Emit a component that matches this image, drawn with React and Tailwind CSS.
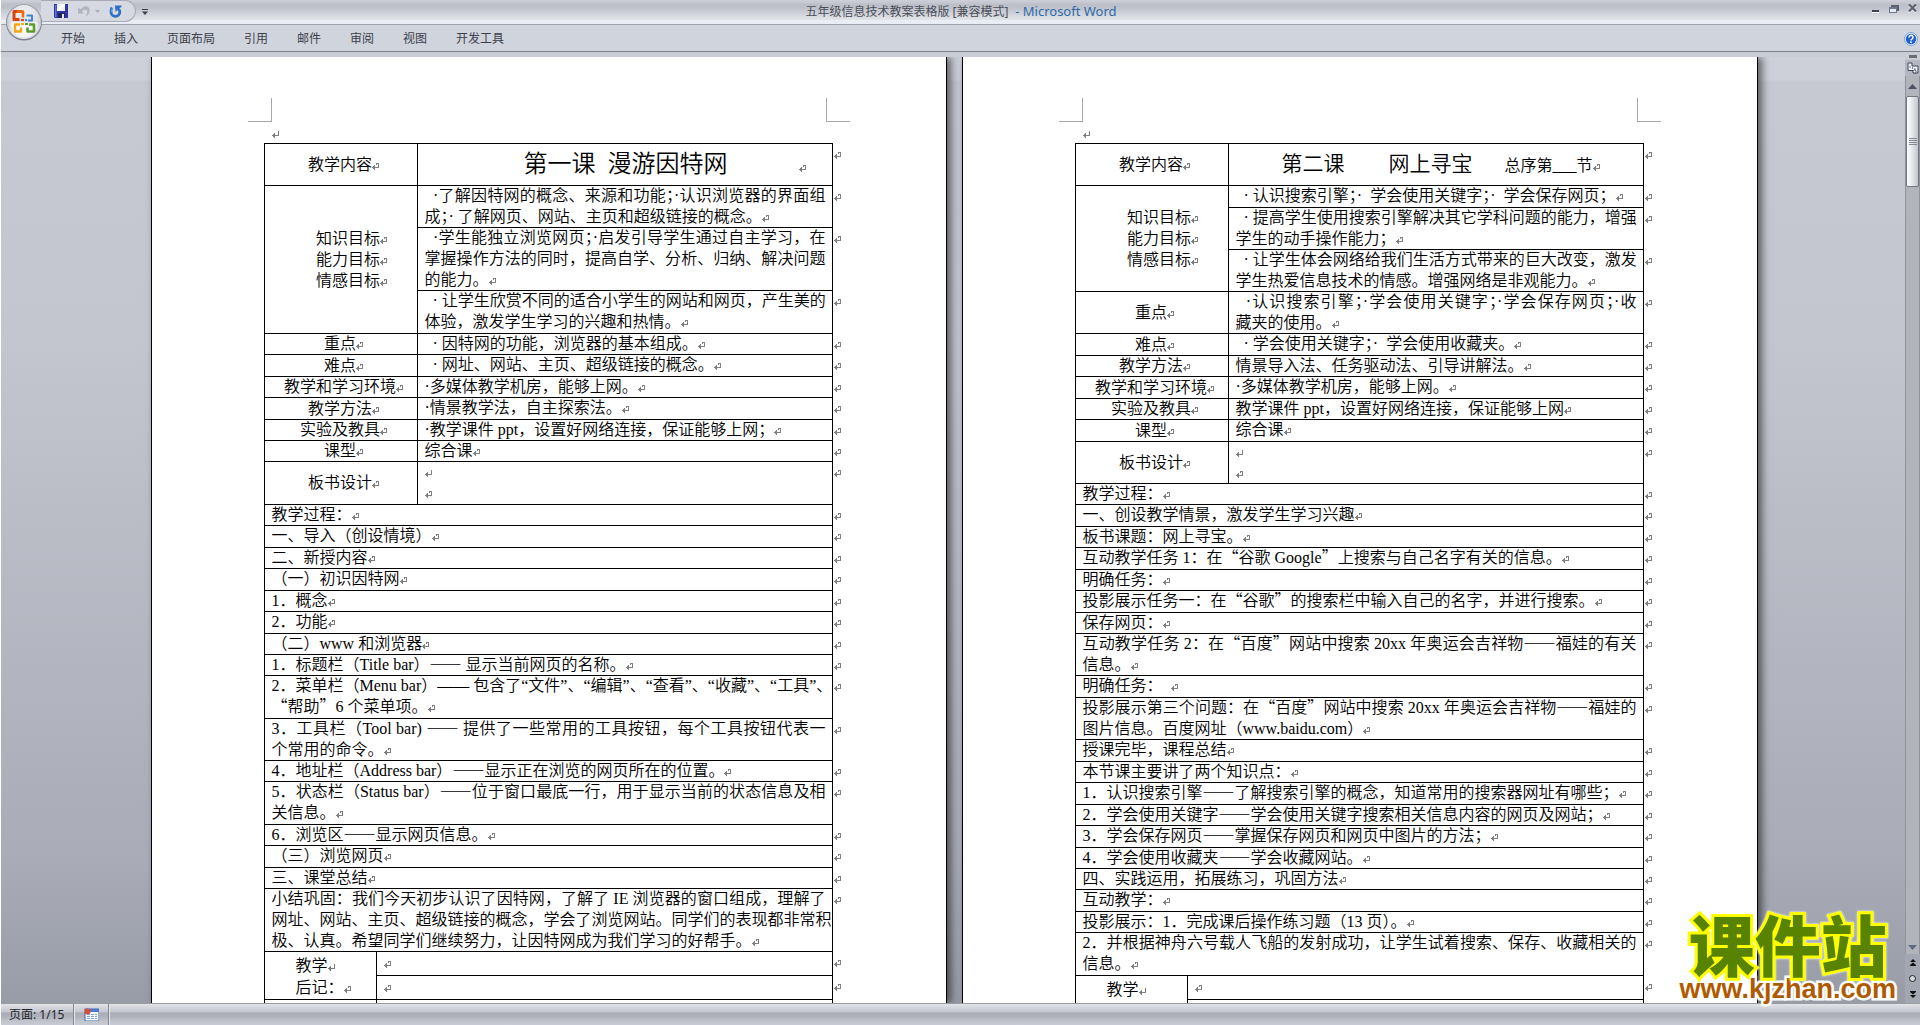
import React from "react";

const NB = "\u00a0";
const DOT = NB + NB + "·";
const SEP = "；·";

const H = {
  21: "h-[21px]",
  22: "h-[22px]",
  24: "h-[24px]",
  42: "h-[42px]",
  43: "h-[43px]",
  63: "h-[63px]",
};

function Mark({ empty = false, className = "" }) {
  return (
    <svg
      viewBox="0 0 8 7"
      className={`inline-block h-[7px] w-2 shrink-0 fill-[#808080] align-baseline ${className}`}
      shapeRendering="crispEdges"
      aria-hidden="true"
    >
      {!empty && <rect x="4" y="0" width="3" height="1" />}
      {!empty && <rect x="4" y="1" width="1" height="1" />}
      <rect x="6" y="0" width="1" height="5" />
      <rect x="2" y="4" width="5" height="1" />
      <rect x="0" y="4" width="1" height="1" />
      <rect x="1" y="3" width="1" height="3" />
      <rect x="2" y="2" width="1" height="5" />
    </svg>
  );
}

// Quotes and dashes take the Chinese face, so that each fills a full square.
function Mixed({ text }) {
  return text.split(/([“”—]+)/).map((part, i) =>
    i % 2 === 1 ? (
      <span key={i} className="font-['Noto_Sans_CJK_SC',sans-serif] leading-none">
        {part}
      </span>
    ) : (
      part
    ),
  );
}

function Lines({ lines, narrow = false }) {
  return lines.map((line, i) => {
    const last = i === lines.length - 1;
    return (
      <span
        key={i}
        className={`block whitespace-nowrap ${last ? "" : "text-justify [text-align-last:justify]"}`}
      >
        {narrow && !last ? line : <Mixed text={line} />}
        {last && <Mark />}
      </span>
    );
  });
}

const RULE = "shadow-[inset_1px_1px_0_#000]";

function EndMark() {
  return (
    <td className="pl-[2px] align-top shadow-[inset_1px_0_0_#000]">
      <Mark />
    </td>
  );
}

function LabelCell({ label, rowSpan = 1, shift = false }) {
  return (
    <th
      scope="row"
      colSpan={2}
      rowSpan={rowSpan}
      className={`${RULE} text-center align-middle [font-weight:inherit] ${shift ? "pl-4" : ""}`}
    >
      {label.map((l) => (
        <span key={l} className="block whitespace-nowrap">
          {l}
          <Mark className="-mr-2" />
        </span>
      ))}
    </th>
  );
}

function FieldRow({ label, h, lines, rowSpan, shift }) {
  return (
    <tr className={H[h]}>
      {label && <LabelCell label={label} rowSpan={rowSpan} shift={shift} />}
      <td className={`${RULE} pr-[6px] pl-2 align-top`}>
        <Lines lines={lines} />
      </td>
      <EndMark />
    </tr>
  );
}

function BoardRow({ h }) {
  return (
    <tr className={H[h]}>
      <LabelCell label={["板书设计"]} />
      <td className={`${RULE} px-2 align-top`}>
        <span className="block">
          <Mark empty />
        </span>
        <span className="block">
          <Mark />
        </span>
      </td>
      <EndMark />
    </tr>
  );
}

function TextRow({ h, lines, narrow }) {
  return (
    <tr className={H[h]}>
      <td colSpan={3} className={`${RULE} pr-[6px] pl-2 align-top`}>
        <Lines lines={lines} narrow={narrow} />
      </td>
      <EndMark />
    </tr>
  );
}

function NotesRows() {
  return (
    <>
      <tr className={H[24]}>
        <th
          scope="row"
          rowSpan={2}
          className={`${RULE} pt-1 pl-8 text-left align-top leading-[22px] [font-weight:inherit]`}
        >
          <span className="block whitespace-nowrap">
            教学
            <Mark empty />
          </span>
          <span className="block whitespace-nowrap">
            后记：
            <Mark />
          </span>
        </th>
        <td colSpan={2} className={`${RULE} px-2 align-top leading-[24px]`}>
          <Mark />
        </td>
        <EndMark />
      </tr>
      <tr className={H[24]}>
        <td colSpan={2} className={`${RULE} px-2 align-top leading-[24px]`}>
          <Mark />
        </td>
        <EndMark />
      </tr>
      <tr className={H[24]}>
        <td className={RULE} />
        <td colSpan={2} className={RULE} />
        <EndMark />
      </tr>
    </>
  );
}

function Corner({ right = false }) {
  return (
    <span
      className={`block h-[24px] w-[24px] border-b border-[#a5a5b5] ${right ? "border-l" : "border-r"}`}
    />
  );
}

function Page({ label, title, children }) {
  return (
    <article
      aria-label={label}
      className="flex max-w-[796px] flex-1 flex-col border-x border-black bg-white px-[112px] shadow-[4px_0_8px_rgba(0,0,0,0.55)]"
    >
      <div className="-mx-4 mt-[41px] flex justify-between">
        <Corner />
        <Corner right />
      </div>
      <div className="h-[21px] pl-2 leading-[21px]">
        <Mark empty />
      </div>
      <table className="w-full table-fixed border-separate border-spacing-0 text-left leading-[21px]">
        <colgroup>
          <col className="w-[112px]" />
          <col className="w-[41px]" />
          <col />
          <col className="w-[2px]" />
        </colgroup>
        <tbody>
          <tr className={H[42]}>
            <LabelCell label={["教学内容"]} />
            <td className={`${RULE} align-middle`}>{title}</td>
            <EndMark />
          </tr>
          {children}
        </tbody>
      </table>
    </article>
  );
}

const FIELDS_1 = [
  {
    label: ["知识目标", "能力目标", "情感目标"],
    rowSpan: 3,
    shift: true,
    h: 42,
    lines: [DOT + "了解因特网的概念、来源和功能" + SEP + "认识浏览器的界面组", "成" + SEP + NB + "了解网页、网站、主页和超级链接的概念。"],
  },
  {
    h: 63,
    lines: [DOT + "学生能独立浏览网页" + SEP + "启发引导学生通过自主学习，在", "掌握操作方法的同时，提高自学、分析、归纳、解决问题", "的能力。"],
  },
  { h: 43, lines: [DOT + NB + "让学生欣赏不同的适合小学生的网站和网页，产生美的", "体验，激发学生学习的兴趣和热情。"] },
  { label: ["重点"], h: 21, lines: [DOT + NB + "因特网的功能，浏览器的基本组成。"] },
  { label: ["难点"], h: 22, lines: [DOT + NB + "网址、网站、主页、超级链接的概念。"] },
  { label: ["教学和学习环境"], h: 21, lines: ["·多媒体教学机房，能够上网。"] },
  { label: ["教学方法"], h: 22, lines: ["·情景教学法，自主探索法。"] },
  { label: ["实验及教具"], h: 21, lines: ["·教学课件 ppt，设置好网络连接，保证能够上网；"] },
  { label: ["课型"], h: 21, lines: ["综合课"] },
];

const TEXT_1 = [
  [21, ["教学过程："]],
  [22, ["一、导入（创设情境）"]],
  [21, ["二、新授内容"]],
  [22, ["（一）初识因特网"]],
  [21, ["1．概念"]],
  [22, ["2．功能"]],
  [21, ["（二）www 和浏览器"]],
  [21, ["1．标题栏（Title bar）——" + NB + "显示当前网页的名称。"]],
  [43, ["2．菜单栏（Menu bar）—— 包含了“文件”、“编辑”、“查看”、“收藏”、“工具”、", "“帮助”6 个菜单项。"], true],
  [42, ["3．工具栏（Tool bar) —— 提供了一些常用的工具按钮，每个工具按钮代表一", "个常用的命令。"]],
  [21, ["4．地址栏（Address bar）——显示正在浏览的网页所在的位置。"]],
  [43, ["5．状态栏（Status bar）——位于窗口最底一行，用于显示当前的状态信息及相", "关信息。"]],
  [21, ["6．浏览区——显示网页信息。"]],
  [22, ["（三）浏览网页"]],
  [21, ["三、课堂总结"]],
  [
    63,
    [
      "小结巩固：我们今天初步认识了因特网，了解了 IE 浏览器的窗口组成，理解了",
      "网址、网站、主页、超级链接的概念，学会了浏览网站。同学们的表现都非常积",
      "极、认真。希望同学们继续努力，让因特网成为我们学习的好帮手。",
    ],
  ],
];

const FIELDS_2 = [
  {
    label: ["知识目标", "能力目标", "情感目标"],
    rowSpan: 3,
    shift: true,
    h: 22,
    lines: [DOT + NB + "认识搜索引擎" + SEP + NB + NB + "学会使用关键字" + SEP + NB + NB + "学会保存网页；"],
  },
  { h: 42, lines: [DOT + NB + "提高学生使用搜索引擎解决其它学科问题的能力，增强", "学生的动手操作能力；"] },
  { h: 42, lines: [DOT + NB + "让学生体会网络给我们生活方式带来的巨大改变，激发", "学生热爱信息技术的情感。增强网络是非观能力。"] },
  { label: ["重点"], h: 42, lines: [DOT + "认识搜索引擎" + SEP + "学会使用关键字" + SEP + "学会保存网页" + SEP + "收", "藏夹的使用。"] },
  { label: ["难点"], h: 22, lines: [DOT + NB + "学会使用关键字" + SEP + NB + NB + "学会使用收藏夹。"] },
  { label: ["教学方法"], h: 21, lines: ["情景导入法、任务驱动法、引导讲解法。"] },
  { label: ["教学和学习环境"], h: 22, lines: ["·多媒体教学机房，能够上网。"] },
  { label: ["实验及教具"], h: 21, lines: ["教学课件 ppt，设置好网络连接，保证能够上网"] },
  { label: ["课型"], h: 22, lines: ["综合课"] },
];

const TEXT_2 = [
  [21, ["教学过程："]],
  [22, ["一、创设教学情景，激发学生学习兴趣"]],
  [21, ["板书课题：网上寻宝。"]],
  [22, ["互动教学任务 1：在“谷歌 Google”上搜索与自己名字有关的信息。"]],
  [21, ["明确任务："]],
  [22, ["投影展示任务一：在“谷歌”的搜索栏中输入自己的名字，并进行搜索。"]],
  [21, ["保存网页："]],
  [42, ["互动教学任务 2：在“百度”网站中搜索 20xx 年奥运会吉祥物——福娃的有关", "信息。"]],
  [22, ["明确任务：" + NB + NB]],
  [42, ["投影展示第三个问题：在“百度”网站中搜索 20xx 年奥运会吉祥物——福娃的", "图片信息。百度网址（www.baidu.com）"]],
  [22, ["授课完毕，课程总结"]],
  [21, ["本节课主要讲了两个知识点："]],
  [22, ["1．认识搜索引擎——了解搜索引擎的概念，知道常用的搜索器网址有哪些；"]],
  [21, ["2．学会使用关键字——学会使用关键字搜索相关信息内容的网页及网站；"]],
  [22, ["3．学会保存网页——掌握保存网页和网页中图片的方法；"]],
  [21, ["4．学会使用收藏夹——学会收藏网站。"]],
  [21, ["四、实践运用，拓展练习，巩固方法"]],
  [22, ["互动教学："]],
  [21, ["投影展示：1．完成课后操作练习题（13 页）。"]],
  [43, ["2．并根据神舟六号载人飞船的发射成功，让学生试着搜索、保存、收藏相关的", "信息。"]],
];

const TABS = ["开始", "插入", "页面布局", "引用", "邮件", "审阅", "视图", "开发工具"];

function OfficeOrb() {
  return (
    <button type="button" aria-label="Office 按钮" className="absolute top-[3px] left-1 h-[38px] w-[38px]">
      <svg viewBox="0 0 38 38" className="h-full w-full">
        <defs>
          <radialGradient id="orb" cx="50%" cy="60%" r="55%">
            <stop offset="0" stopColor="#ffffff" />
            <stop offset="0.6" stopColor="#f2f3f6" />
            <stop offset="0.85" stopColor="#c9ccd5" />
            <stop offset="1" stopColor="#a3a7b2" />
          </radialGradient>
          <linearGradient id="orbTop" x1="0" y1="0" x2="0" y2="1">
            <stop offset="0" stopColor="#ffffff" />
            <stop offset="1" stopColor="#d2d5dd" />
          </linearGradient>
        </defs>
        <circle cx="19" cy="19.5" r="18" fill="#7d818c" />
        <circle cx="19" cy="18.7" r="17.4" fill="url(#orb)" />
        <path d="M3 18a16 16 0 0 1 32 0q-16 3 -32 0z" fill="url(#orbTop)" opacity="0.75" />
        <g fill="none" strokeLinejoin="round">
          <path d="M14.500 16.500h-5.500v-8h8" stroke="#d9420b" strokeWidth="3" />
          <path d="M12 8.500h6v6" stroke="#ee6c10" strokeWidth="2.600" />
          <path d="M21.500 12.500h5.500v5h-4" stroke="#3b86cf" strokeWidth="2" />
          <path d="M15 21.500h-5v7h6v-4" stroke="#f3a712" strokeWidth="2.400" />
          <path d="M24 21.500h5v7h-6.500v-4" stroke="#5a9e2c" strokeWidth="2.600" />
        </g>
        <rect x="16" y="16" width="3" height="2" fill="#d9420b" />
        <rect x="20" y="16" width="2" height="2" fill="#3b86cf" />
        <rect x="16" y="20" width="3" height="2" fill="#f3a712" />
        <rect x="20" y="20" width="3" height="2" fill="#5a9e2c" />
      </svg>
    </button>
  );
}

function SaveIcon() {
  return (
    <svg viewBox="0 0 14 14" className="h-[14px] w-[14px]">
      <path d="M0 0h14v14H1L0 13z" fill="#2f35a8" />
      <path d="M1 1h1.500v12H1z" fill="#6a71dc" />
      <rect x="3" y="0" width="8" height="7" fill="#eef1fb" />
      <path d="M3 6L9 0h2v1L5 7H3z" fill="#ffffff" />
      <rect x="4" y="9" width="7" height="5" fill="#20265a" />
      <rect x="8" y="10" width="2" height="4" fill="#e4e7f5" />
    </svg>
  );
}

function UndoIcon() {
  return (
    <svg viewBox="0 0 13 13" className="h-[13px] w-[13px]">
      <path d="M1 2v6.500h6L5 6.500q2.500-3 4.500-1.500t-1 7q5-3.500 4-7.500T7 1.500L3 4.500z" fill="#b0b4bf" />
    </svg>
  );
}

function RedoIcon() {
  return (
    <svg viewBox="0 0 13 13" className="h-[13px] w-[13px]">
      <path d="M3 2.500q-1.500 2-1 4.500a4.400 4.400 0 0 0 8.800 0q0-2-2-3.500" fill="none" stroke="#2f6fc4" strokeWidth="2.800" />
      <path d="M3.200 3.500q-1 1.500-.7 3.500" fill="none" stroke="#6ba6ea" strokeWidth="1" />
      <path d="M6 0.500h6.500v1.500l-2 1L6.500 7z" fill="#2f6fc4" />
    </svg>
  );
}

function TitleBar() {
  return (
    <div className="flex h-[25px] items-start border-b border-[#9fa3ae] bg-[linear-gradient(to_bottom,#cdd0d8_0,#c4c7cf_3px,#bcbfc8_4px,#bfc2cb_8px,#cbced6_12px,#dcdfe4_18px,#e2e4e6_20px,#eaeef6_20px,#e8ecf4_24px)]">
      <div className="flex flex-1 items-start">
        <div className="ml-[40px] flex h-[22px] w-[95px] items-center rounded-r-full border border-l-0 border-[#a8abb6] bg-[#d6d9e1] pl-[13px]">
          <button type="button" aria-label="保存">
            <SaveIcon />
          </button>
          <button type="button" aria-label="撤消" className="ml-[9px]">
            <UndoIcon />
          </button>
          <button type="button" aria-label="撤消列表" className="ml-[5px]">
            <svg viewBox="0 0 5 3" className="h-[3px] w-[5px]">
              <path d="M0 0h5L2.500 3z" fill="#a9adb8" />
            </svg>
          </button>
          <button type="button" aria-label="恢复" className="ml-[9px]">
            <RedoIcon />
          </button>
        </div>
        <button type="button" aria-label="自定义快速访问工具栏" className="mt-[9px] ml-[6px]">
          <svg viewBox="0 0 6 6" className="h-[6px] w-[6px]">
            <path d="M0 0h6v1H0zM0 2.500h6L3 6z" fill="#3a3e48" />
          </svg>
        </button>
      </div>
      <h1 className="pt-[2px] pl-1 text-[12px] leading-[20px] whitespace-pre text-[#4a4e58]">
        五年级信息技术教案表格版 [兼容模式]
        <span className="text-[13px] leading-none text-[#2f6aa8]">{"  - Microsoft Word"}</span>
      </h1>
      <div className="flex flex-1 justify-end gap-[9px] pt-1 pr-[3px]">
        <button type="button" aria-label="最小化">
          <svg viewBox="0 0 8 9" className="h-[9px] w-2" shapeRendering="crispEdges">
            <rect x="0" y="6" width="7" height="2" fill="#40444e" />
            <rect x="0" y="8" width="7" height="1" fill="#fff" />
          </svg>
        </button>
        <button type="button" aria-label="还原">
          <svg viewBox="0 0 10 8" className="h-2 w-[10px]" shapeRendering="crispEdges">
            <path d="M2 0h8v6H8V2H2z" fill="#5a5f6b" />
            <path d="M0 2h8v6H0z" fill="#6d7890" />
            <rect x="1" y="4" width="6" height="3" fill="#e6e9f0" />
          </svg>
        </button>
        <button type="button" aria-label="关闭">
          <svg viewBox="0 0 9 9" className="h-[9px] w-[9px]">
            <path d="M1 1.500l7 7M8 1.500l-7 7" stroke="#fff" strokeWidth="2" />
            <path d="M1 0.500l7 7M8 0.500l-7 7" stroke="#596070" strokeWidth="2.200" />
          </svg>
        </button>
      </div>
    </div>
  );
}

function RibbonTabs() {
  return (
    <nav className="flex h-[27px] items-center border-b border-[#7c818c] bg-[#d0d4dd] pt-[2px] pr-[2px] pl-[60px] text-[12px] text-[#3c404b]">
      <div className="flex flex-1 gap-[29px]">
        {TABS.map((t) => (
          <button key={t} type="button" className="leading-[20px] whitespace-nowrap">
            {t}
          </button>
        ))}
      </div>
      <button type="button" aria-label="帮助">
        <svg viewBox="0 0 14 14" className="h-[14px] w-[14px]">
          <circle cx="7" cy="7" r="6.500" fill="#eef4fd" stroke="#7ba0d8" />
          <circle cx="7" cy="7" r="5.200" fill="#1f5fd0" />
          <path d="M5 5.500a2 2 0 1 1 3 1.600q-1 .5-1 1.300" fill="none" stroke="#fff" strokeWidth="1.500" />
          <rect x="6.200" y="9.400" width="1.600" height="1.600" fill="#fff" />
        </svg>
      </button>
    </nav>
  );
}

function ScrollBar() {
  return (
    <aside aria-label="垂直滚动条" className="flex w-[15px] shrink-0 flex-col bg-[#c9ccd4] pt-[3px]">
      <button type="button" aria-label="拆分" className="mx-auto h-[3px] w-2 shrink-0 bg-[#6b6e75]" />
      <button type="button" aria-label="标尺" className="mt-[2px] flex h-4 shrink-0 items-center justify-center bg-[#b4b7bf]">
        <svg viewBox="0 0 12 12" className="h-3 w-3">
          <path d="M1 1h4v3h6v7H6V8.500H1z" fill="#eceef3" stroke="#3f4a5c" />
          <path d="M3 4v2M5.500 5v2M8 6v2" stroke="#7d8798" />
          <circle cx="7.500" cy="9.500" r="1.500" fill="#fff" stroke="#3f4a5c" />
        </svg>
      </button>
      <div className="flex flex-1 flex-col border-x border-[#8f939c] bg-[#b1b4bb]">
        <button type="button" aria-label="向上滚动" className="flex h-5 items-center justify-center">
          <svg viewBox="0 0 9 5" className="h-[5px] w-[9px]">
            <path d="M0 5h9L4.500 0z" fill="#4a5264" />
          </svg>
        </button>
        <div className="flex h-[91px] flex-col items-center justify-center gap-px rounded-[2px] border border-[#73767e] bg-[linear-gradient(to_right,#ffffff,#eceef2_35%,#dcdfe5_60%,#c2c5cd)]">
          <i className="h-px w-2 bg-[#84888f]" />
          <i className="h-px w-2 bg-[#84888f]" />
          <i className="h-px w-2 bg-[#84888f]" />
          <i className="h-px w-2 bg-[#84888f]" />
        </div>
        <button type="button" aria-label="向下滚动" className="mt-auto flex h-[14px] items-center justify-center">
          <svg viewBox="0 0 9 5" className="h-[5px] w-[9px]">
            <path d="M0 0h9L4.500 5z" fill="#5f6b83" />
          </svg>
        </button>
      </div>
      <div className="flex h-[49px] shrink-0 flex-col items-center justify-between bg-[#a3a7b1] py-[5px]">
        <button type="button" aria-label="前一页">
          <svg viewBox="0 0 6 7" className="h-[7px] w-[6px]">
            <path d="M3 0l3 3H0zM3 3.500l3 2.500v1H0V6z" fill="#111" />
          </svg>
        </button>
        <button type="button" aria-label="选择浏览对象">
          <svg viewBox="0 0 7 7" className="h-[7px] w-[7px]">
            <circle cx="3.500" cy="3.500" r="3" fill="#d5d8de" stroke="#222" />
          </svg>
        </button>
        <button type="button" aria-label="下一页">
          <svg viewBox="0 0 6 7" className="h-[7px] w-[6px]">
            <path d="M3 7l3-3H0zM3 3.500L6 1V0H0v1z" fill="#111" />
          </svg>
        </button>
      </div>
    </aside>
  );
}

function StatusBar() {
  return (
    <footer className="flex h-[22px] shrink-0 items-stretch border-t border-[#9a9ca2] bg-[linear-gradient(to_bottom,#e2e4e9_0,#d6d8df_3px,#c3c6ce_8px,#a9acb5_9px,#b0b3bc_13px,#c0c3cc_17px,#c9ccd6_21px)] text-[12px] text-[#22252c]">
      <button type="button" className="border-r border-[#85888f] pr-[9px] pl-2 leading-[21px] whitespace-nowrap">
        页面: 1/15
      </button>
      <button type="button" aria-label="宏录制" className="flex items-center border-r border-l border-r-[#85888f] border-l-[#e4e6ea] px-[9px]">
        <svg viewBox="0 0 15 13" className="h-[13px] w-[15px]">
          <rect x="1" y="1" width="14" height="12" fill="#f6f9ff" stroke="#3a63b4" />
          <rect x="1" y="1" width="14" height="3" fill="#4b79cf" />
          <path d="M3 6.500h10M3 8.500h10M3 10.500h10" stroke="#8aa6da" strokeDasharray="3 1" />
          <circle cx="3.500" cy="3.500" r="3" fill="#d9502e" />
        </svg>
      </button>
      <span className="border-l border-[#e4e6ea]" />
    </footer>
  );
}

function Watermark() {
  return (
    <a
      href="#kjzhan"
      className="absolute right-[24px] bottom-[22px] flex flex-col items-center whitespace-nowrap"
    >
      <span className="text-[66px] leading-[60px] font-black text-[#578300] [-webkit-text-stroke:6px_#ffff00] [paint-order:stroke_fill] drop-shadow-[0_0_1px_#fff]">
        课件站
      </span>
      <span className="font-['Liberation_Sans',sans-serif] text-[27px] leading-[28px] font-bold text-[#b05a00] [-webkit-text-stroke:5px_#ffffff] [paint-order:stroke_fill]">
        www.kjzhan.com
      </span>
    </a>
  );
}

export default function App() {
  return (
    <div className="relative flex h-screen flex-col overflow-hidden border-l border-white bg-[#c9ccd4] font-['Noto_Sans','Noto_Sans_CJK_SC',sans-serif]">
      <header className="relative shrink-0">
        <TitleBar />
        <RibbonTabs />
        <OfficeOrb />
      </header>
      <div className="flex min-h-0 flex-1">
        <main className="flex min-w-0 flex-1 flex-col pt-[5px]">
          <div
            lang="zh-CN"
            className="flex min-h-0 flex-1 justify-center gap-[15px] overflow-hidden bg-[linear-gradient(to_bottom,#cdd0d9_0,#cdd0d9_23px,#c6c9d2_24px,#c3c6cf_30%,#a9acb6_85%,#989ca6)] pl-[2px] font-['Liberation_Serif','Noto_Sans_CJK_SC',serif] text-[16px] font-[350] text-black"
          >
            <Page
              label="第一课"
              title={
                <div className="flex items-baseline justify-end gap-[71px] pr-[25px] whitespace-nowrap">
                  <span className="text-[24px] leading-[42px]">第一课{"\u2002"}漫游因特网</span>
                  <Mark />
                </div>
              }
            >
              {FIELDS_1.map((f, i) => (
                <FieldRow key={i} {...f} />
              ))}
              <BoardRow h={43} />
              {TEXT_1.map(([h, lines, narrow], i) => (
                <TextRow key={i} h={h} lines={lines} narrow={narrow} />
              ))}
              <NotesRows />
            </Page>
            <Page
              label="第二课"
              title={
                <div className="flex items-baseline justify-center pl-3 whitespace-nowrap">
                  <span className="mr-11 text-[21px] leading-[42px]">第二课</span>
                  <span className="mr-8 text-[21px] leading-[42px]">网上寻宝</span>
                  <span>总序第___节</span>
                  <Mark />
                </div>
              }
            >
              {FIELDS_2.map((f, i) => (
                <FieldRow key={i} {...f} />
              ))}
              <BoardRow h={42} />
              {TEXT_2.map(([h, lines, narrow], i) => (
                <TextRow key={i} h={h} lines={lines} narrow={narrow} />
              ))}
              <NotesRows />
            </Page>
          </div>
        </main>
        <ScrollBar />
      </div>
      <StatusBar />
      <Watermark />
    </div>
  );
}
